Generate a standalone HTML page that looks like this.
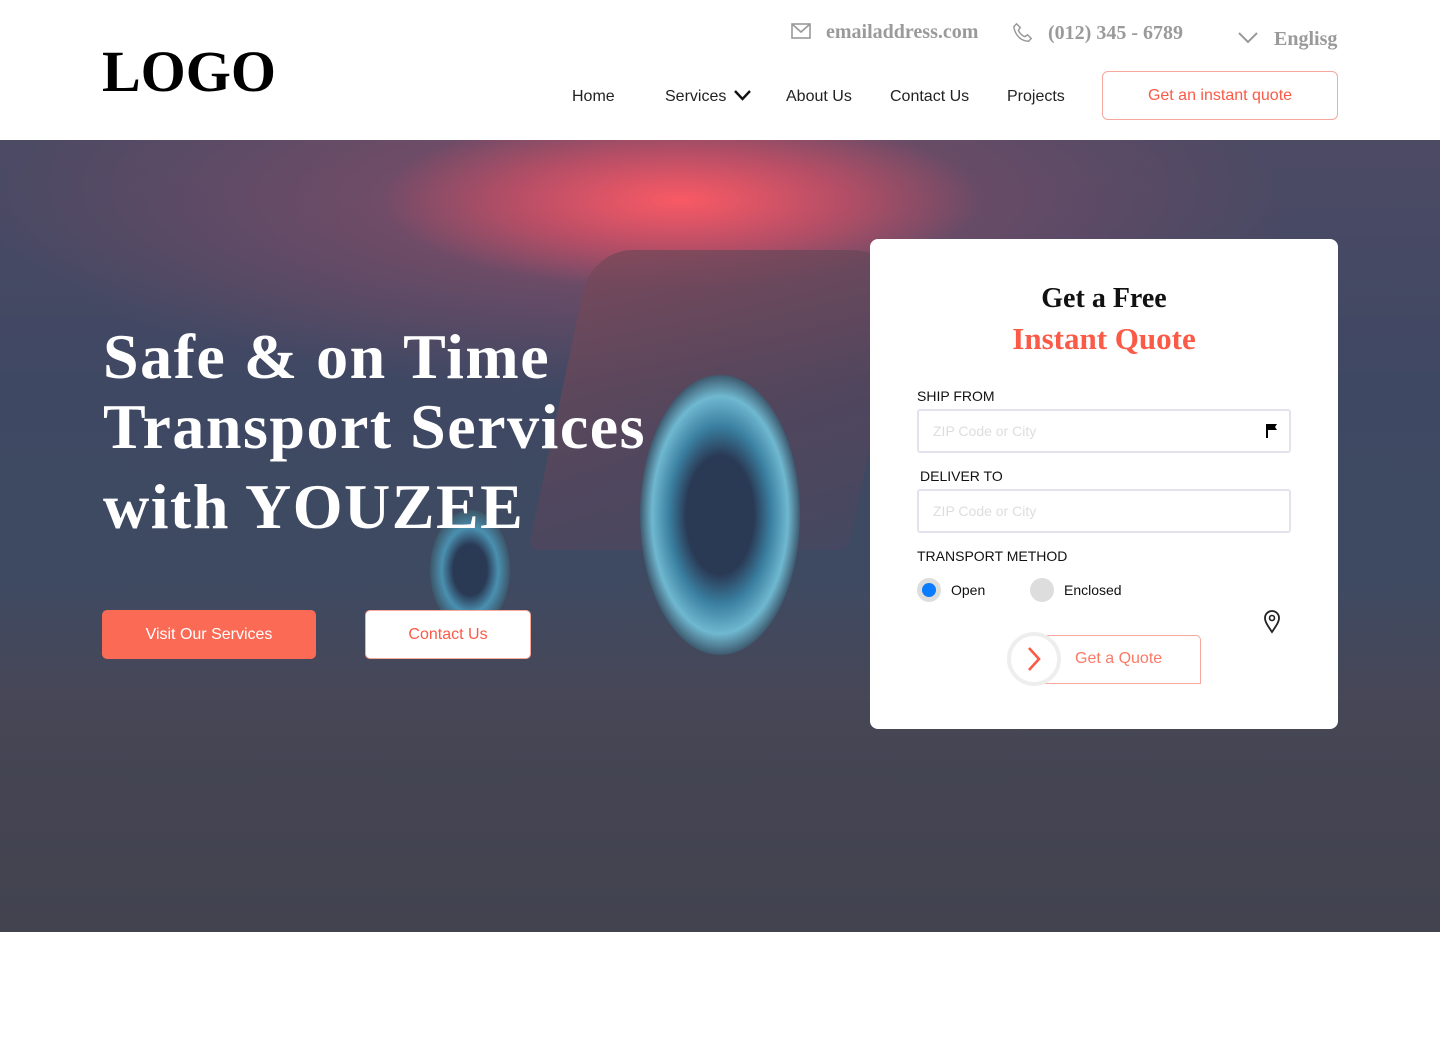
<!DOCTYPE html>
<html><head><meta charset="utf-8"><style>
*{margin:0;padding:0;box-sizing:border-box}
body{width:1440px;height:1037px;background:#fff;font-family:"Liberation Sans",sans-serif;position:relative;overflow:hidden}
.abs{position:absolute}
.logo{left:102px;top:38px;font-family:"Liberation Serif",serif;font-weight:bold;font-size:58px;letter-spacing:0px;color:#000}
.top{top:20px;font-family:"Liberation Serif",serif;font-weight:bold;font-size:20px;color:#9a9a9a}
.nav{top:88px;font-size:16px;color:#222}
.qbtn{left:1102px;top:71px;width:236px;height:49px;border:1px solid #f7a79b;border-radius:6px;color:#fa5a46;font-size:16px;display:flex;align-items:center;justify-content:center}
.hero{left:0;top:140px;width:1440px;height:792px;overflow:hidden;
background:
radial-gradient(ellipse 300px 90px at 680px 60px,rgba(255,90,100,.95),rgba(240,80,100,.5) 55%,rgba(0,0,0,0) 100%),
radial-gradient(ellipse 650px 180px at 640px 70px,rgba(190,80,110,.55),rgba(0,0,0,0) 100%),
linear-gradient(180deg,#4d4a64 0%,#3f4863 30%,#3e4a62 55%,#474757 70%,#42434f 100%)}
.wheel{border-radius:50%;position:absolute}
.h1{left:103px;top:322px;font-family:"Liberation Serif",serif;font-weight:bold;font-size:64px;letter-spacing:1.5px;line-height:70px;color:#fff}
.b1{left:102px;top:610px;width:214px;height:49px;background:#fa6a55;border-radius:5px;color:#fff;font-size:16px;display:flex;align-items:center;justify-content:center}
.b2{left:365px;top:610px;width:166px;height:49px;background:#fff;border:1px solid #f7a79b;border-radius:5px;color:#fa5a46;font-size:16px;display:flex;align-items:center;justify-content:center}
.card{left:870px;top:239px;width:468px;height:490px;background:#fff;border-radius:8px}
.lbl{font-size:14px;color:#111;font-weight:500}
.inp{width:374px;height:44px;border:2px solid #e3e3ee;border-radius:3px;font-size:14px;color:#ddd;padding:12px 14px}
</style></head><body>
<div class="abs logo">LOGO</div>
<svg class="abs" style="left:791px;top:23px" width="20" height="16" viewBox="0 0 20 16"><rect x="1" y="1" width="18" height="14" fill="none" stroke="#999" stroke-width="1.6"/><path d="M1 1l9 8 9-8" fill="none" stroke="#999" stroke-width="1.6"/></svg>
<div class="abs top" style="left:826px;top:21px">emailaddress.com</div>
<svg class="abs" style="left:1012px;top:22px" width="22" height="22" viewBox="0 0 24 24"><path d="M5 2l4 4-2 3c1 3 4 6 7 7l3-2 4 4-3 3C10 21 3 14 2 5z" fill="none" stroke="#999" stroke-width="1.6"/></svg>
<div class="abs top" style="left:1048px;top:22px">(012) 345 - 6789</div>
<svg class="abs" style="left:1238px;top:32px" width="20" height="12" viewBox="0 0 20 12"><path d="M1 1l9 9 9-9" fill="none" stroke="#999" stroke-width="2"/></svg>
<div class="abs top" style="left:1274px;top:28px">Englisg</div>
<div class="abs nav" style="left:572px">Home</div>
<div class="abs nav" style="left:665px">Services</div>
<svg class="abs" style="left:734px;top:90px" width="17" height="11" viewBox="0 0 17 11"><path d="M1 1l7.5 8L16 1" fill="none" stroke="#111" stroke-width="2.4"/></svg>
<div class="abs nav" style="left:786px">About Us</div>
<div class="abs nav" style="left:890px">Contact Us</div>
<div class="abs nav" style="left:1007px">Projects</div>
<div class="abs qbtn">Get an instant quote</div>

<div class="abs hero">
 <div class="abs" style="left:560px;top:110px;width:320px;height:300px;background:linear-gradient(160deg,#7a4858,#54465c 60%,#464760);border-radius:40px 60px 10px 10px;opacity:.8;transform:skewX(-12deg)"></div>
 <div class="wheel" style="left:640px;top:235px;width:160px;height:280px;background:radial-gradient(ellipse at center,#2a3a55 30%,#3a7fa0 45%,#6fb8d0 60%,#2a3448 75%)"></div>
 <div class="wheel" style="left:430px;top:370px;width:80px;height:120px;background:radial-gradient(ellipse at center,#2a3a55 30%,#4a90b0 50%,#3a4a5a 75%)"></div>
 <div class="abs" style="left:0;top:560px;width:1440px;height:232px;background:linear-gradient(180deg,rgba(70,70,85,.6),#42434f)"></div>
</div>
<div class="abs h1">Safe &amp; on Time<br>Transport Services<br><span style="line-height:90px">with YOUZEE</span></div>
<div class="abs b1">Visit Our Services</div>
<div class="abs b2">Contact Us</div>

<div class="abs card">
 <div class="abs" style="left:0;width:468px;top:44px;text-align:center;font-family:'Liberation Serif',serif;font-weight:bold;font-size:28px;color:#111">Get a Free</div>
 <div class="abs" style="left:0;width:468px;top:82px;text-align:center;font-family:'Liberation Serif',serif;font-weight:bold;font-size:31px;color:#fa5a46">Instant Quote</div>
 <div class="abs lbl" style="left:47px;top:149px">SHIP FROM</div>
 <div class="abs inp" style="left:47px;top:170px">ZIP Code or City</div>
 <svg class="abs" style="left:396px;top:184px" width="12" height="15" viewBox="0 0 12 15"><path d="M1 1v14" stroke="#000" stroke-width="2"/><path d="M2 1h9l-2 3 2 3H2z" fill="#000"/></svg>
 <div class="abs lbl" style="left:50px;top:229px">DELIVER TO</div>
 <div class="abs inp" style="left:47px;top:250px">ZIP Code or City</div>
 <div class="abs lbl" style="left:47px;top:309px">TRANSPORT METHOD</div>
 <div class="abs" style="left:47px;top:339px;width:24px;height:24px;border-radius:50%;background:#ddd"></div>
 <div class="abs" style="left:52px;top:344px;width:14px;height:14px;border-radius:50%;background:#0a7cff"></div>
 <div class="abs lbl" style="left:81px;top:343px">Open</div>
 <div class="abs" style="left:160px;top:339px;width:24px;height:24px;border-radius:50%;background:#ddd"></div>
 <div class="abs lbl" style="left:194px;top:343px">Enclosed</div>
 <svg class="abs" style="left:393px;top:370px" width="18" height="25" viewBox="0 0 18 25"><path d="M9 23C5 17 2 13 2 9a7 7 0 0114 0c0 4-3 8-7 14z" fill="none" stroke="#222" stroke-width="1.8"/><circle cx="9" cy="9" r="2.5" fill="none" stroke="#222" stroke-width="1.6"/></svg>
 <div class="abs" style="left:160px;top:396px;width:171px;height:49px;border:1px solid #f7a79b;border-radius:0 5px 0 0;color:#fa7a66;font-size:16px;padding:14px 0 0 44px">Get a Quote</div>
 <div class="abs" style="left:137px;top:393px;width:54px;height:54px;border-radius:50%;background:#fff;border:4px solid #eee"></div>
 <svg class="abs" style="left:155px;top:407px" width="18" height="26" viewBox="0 0 18 26"><path d="M4 2l10 11L4 24" fill="none" stroke="#fa5a46" stroke-width="2.6"/></svg>
</div>
</body></html>
